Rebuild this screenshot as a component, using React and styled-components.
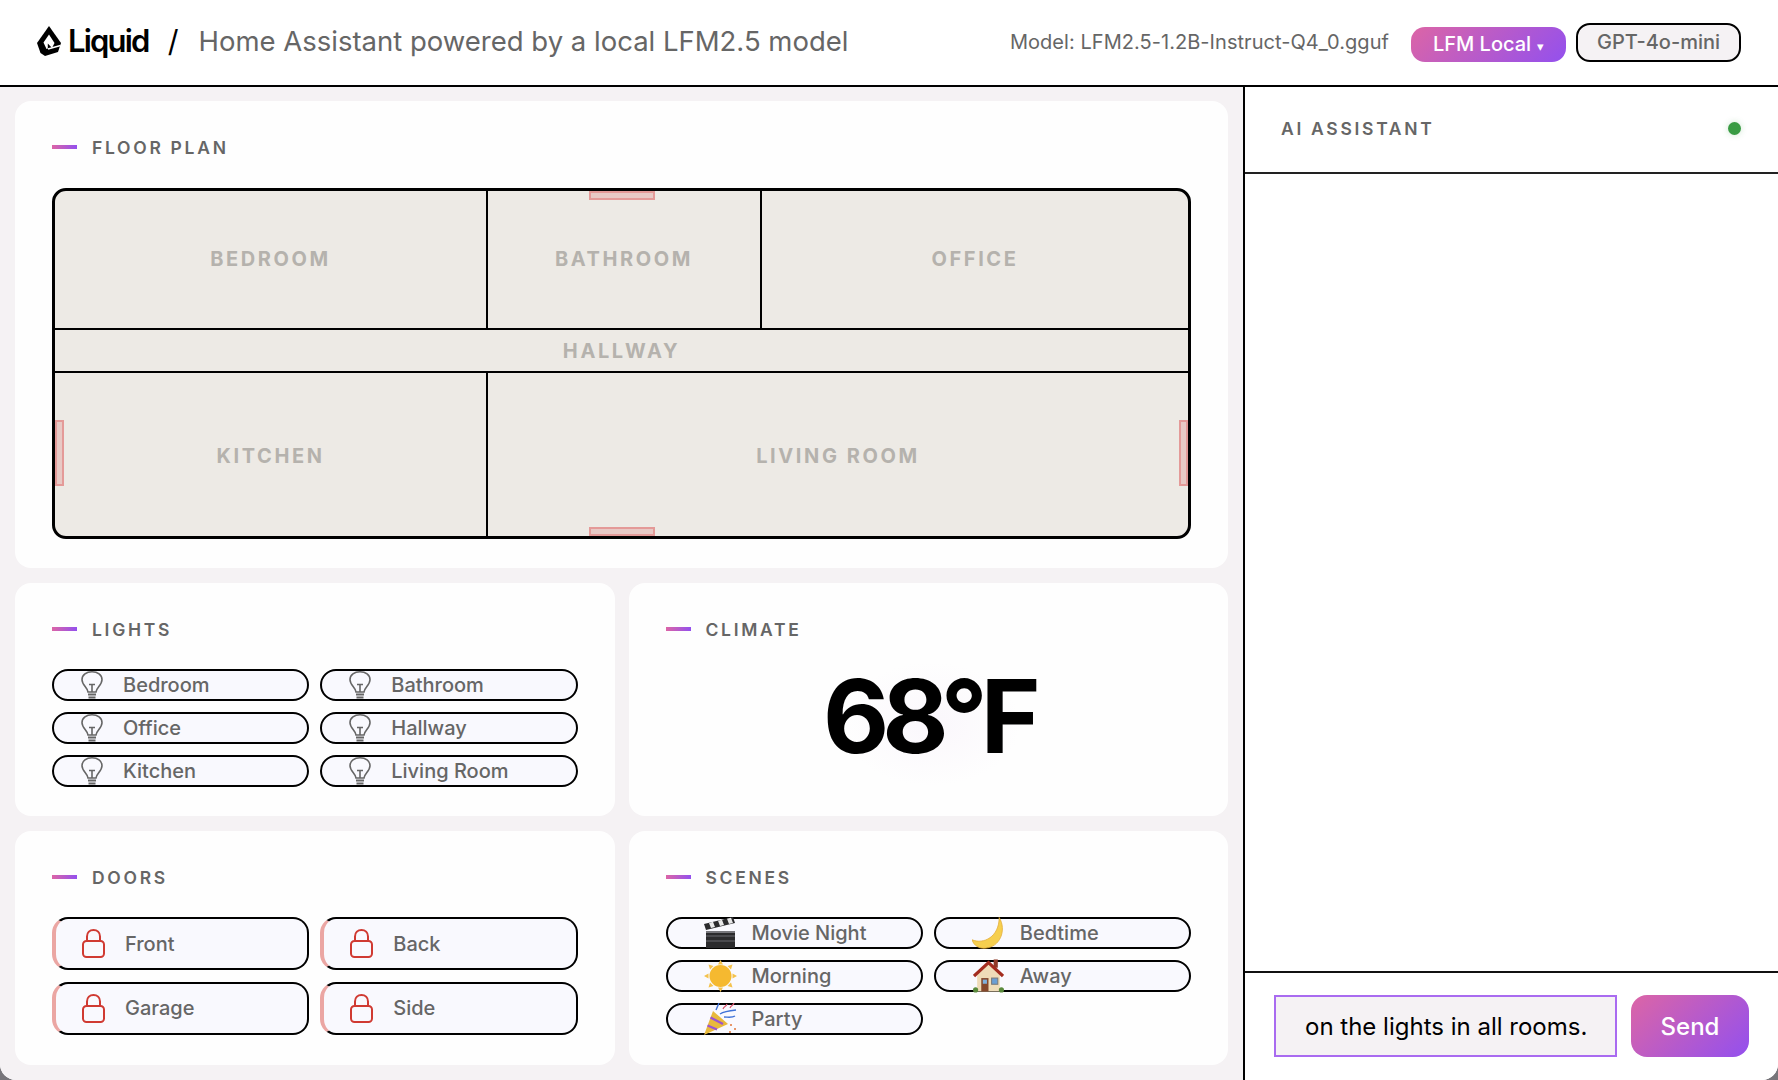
import React from 'react';
import styled, { createGlobalStyle, css } from 'styled-components';

const accent = 'linear-gradient(135deg, #dc65a6 0%, #9350ee 100%)';

const GlobalStyle = createGlobalStyle`
    html, body {
        margin: 0;
        padding: 0;
        background: #77757a;
        overflow: hidden;
    }
    * {
        box-sizing: border-box;
    }
`
const Frame = styled.div`
    width: 1778px;
    height: 1080px;
    display: flex;
    flex-direction: column;
    background: #fff;
    border-radius: 0 0 16px 16px;
    overflow: hidden;
    font-family: Inter, "Liberation Sans", sans-serif;
    color: #666;
`
const Header = styled.header`
    height: 87px;
    flex: none;
    display: flex;
    align-items: center;
    justify-content: space-between;
    padding: 0 37px 1px;
    border-bottom: 2px solid #000;
`
const Brand = styled.div`
    display: flex;
    align-items: center;
    margin-bottom: 3px;
`
const LogoText = styled.span`
    margin-left: 7px;
    font-size: 31px;
    font-weight: 600;
    letter-spacing: -1.8px;
    color: #000;
`
const Slash = styled.span`
    margin-left: 19px;
    font-size: 30px;
    color: #000;
`
const Title = styled.h1`
    margin: 0 0 0 20px;
    font-size: 27.5px;
    font-weight: 400;
    color: #666;
`
const ModelBar = styled.div`
    display: flex;
    align-items: flex-end;
    height: 39px;
`
const ModelName = styled.span`
    margin: 0 22px 3px 0;
    font-size: 20px;
    line-height: 34px;
    letter-spacing: 0.05px;
    color: #666;
`
const ModelButton = styled.button`
    font-family: inherit;
    font-size: 20px;
    font-weight: 500;
    border-radius: 14px;
    ${props => props.$active ? css`
        height: 35px;
        width: 155px;
        margin-right: 10px;
        border: none;
        background: ${accent};
        color: #fff;
    ` : css`
        height: 39px;
        width: 165px;
        border: 2px solid #000;
        background: #f5f2f4;
        color: #666;
    `}
`
const Caret = styled.span`
    margin-left: 6px;
    font-size: 13px;
`
const Main = styled.div`
    flex: 1;
    min-height: 0;
    display: flex;
`
const Dashboard = styled.main`
    width: 1243px;
    flex: none;
    display: grid;
    grid-template-columns: 1fr 1fr;
    grid-template-rows: 467px 233px 234px;
    gap: 15px 14px;
    padding: 14px 15px 15px;
    background: #f5f2f4;
`
const Card = styled.section`
    display: flex;
    flex-direction: column;
    padding: 36px 37px 0;
    background: #fefefe;
    border-radius: 16px;
    ${props => props.$wide && css`
        grid-column: 1 / 3;
    `}
`
const CardTitle = styled.h2`
    display: flex;
    align-items: center;
    height: 20px;
    margin: 0 0 30px;
    font-size: 17.5px;
    font-weight: 600;
    letter-spacing: 2.7px;
    color: #666;
    &::before {
        content: '';
        width: 25px;
        height: 4px;
        margin-right: 15px;
        background: linear-gradient(90deg, #dc65a6, #9350ee);
    }
`
const Floor = styled.div`
    position: relative;
    height: 351px;
    margin-top: 1px;
    display: grid;
    grid-template-columns: 433px 274px 1fr;
    grid-template-rows: 139px 43px 1fr;
    background: #edeae5;
    border: 3px solid #000;
    border-radius: 14px;
`
const Room = styled.div`
    display: flex;
    align-items: center;
    justify-content: center;
    padding: ${props => props.$pad || '0'};
    font-size: 20px;
    font-weight: 700;
    letter-spacing: 2.6px;
    color: #b5b2ad;
    ${props => props.$right && css`
        border-right: 2px solid #000;
    `}
    ${props => props.$bottom && css`
        border-bottom: 2px solid #000;
    `}
    ${props => props.$span && css`
        grid-column: span ${props.$span};
    `}
`
const windowSides = {
    top: css`top: 0; left: 534px; width: 66px; height: 9px;`,
    bottom: css`bottom: 0; left: 534px; width: 66px; height: 9px;`,
    left: css`top: 229px; left: 0; width: 9px; height: 66px;`,
    right: css`top: 229px; right: 0; width: 9px; height: 66px;`,
}
const Window = styled.span`
    position: absolute;
    background: rgba(214, 70, 70, 0.2);
    border: 2px solid rgba(222, 90, 90, 0.42);
    ${props => windowSides[props.$side]}
`
const ButtonGrid = styled.div`
    display: grid;
    grid-template-columns: 1fr 1fr;
    gap: ${props => props.$gap}px 11px;
`
const Pill = styled.button`
    display: flex;
    align-items: center;
    height: 32px;
    padding: 0 0 0 ${props => props.$inset}px;
    font-family: inherit;
    font-size: 20px;
    font-weight: 500;
    color: #666;
    background: #f9f9fe;
    border: 2px solid #000;
    border-radius: 16px;
`
const DoorButton = styled(Pill)`
    height: 53px;
    border-radius: 16px;
    border-left: 4px solid #eba6a3;
`
const Icon = styled.svg`
    flex: none;
    margin-right: ${props => props.$gap}px;
    overflow: visible;
`
const SceneIcon = styled.span`
    flex: none;
    width: 33px;
    margin-right: 15px;
    display: flex;
    justify-content: center;
    align-items: center;
    height: 28px;
    overflow: visible;
`
const Temperature = styled.div`
    position: relative;
    display: flex;
    justify-content: center;
    margin-top: -15px;
    font-size: 102px;
    line-height: 124px;
    font-weight: 700;
    letter-spacing: -7px;
    color: #000;
    &::before {
        content: '';
        position: absolute;
        left: 175px;
        top: 8px;
        width: 180px;
        height: 124px;
        border-radius: 50%;
        background: radial-gradient(closest-side, rgba(232, 210, 240, 0.16), rgba(232, 210, 240, 0));
    }
`
const TemperatureValue = styled.span`
    position: relative;
`
const Assistant = styled.aside`
    flex: 1;
    min-width: 0;
    display: flex;
    flex-direction: column;
    border-left: 2px solid #000;
    background: #fff;
`
const AssistantHeader = styled.div`
    height: 87px;
    flex: none;
    display: flex;
    align-items: center;
    justify-content: space-between;
    padding: 0 37px 2px 36px;
    border-bottom: 2px solid #222;
`
const AssistantTitle = styled.h2`
    margin: 0;
    font-size: 17.5px;
    font-weight: 600;
    letter-spacing: 2.7px;
    color: #666;
`
const StatusDot = styled.span`
    width: 13px;
    height: 13px;
    border-radius: 50%;
    background: #399b43;
    box-shadow: 0 0 6px rgba(57, 155, 67, 0.25);
`
const Messages = styled.div`
    flex: 1;
`
const Composer = styled.form`
    height: 109px;
    flex: none;
    display: flex;
    gap: 14px;
    padding: 22px 29px 23px 29px;
    border-top: 2px solid #111;
`
const ChatInput = styled.input`
    flex: 1;
    min-width: 0;
    padding: 0 29px;
    font-family: inherit;
    font-size: 24px;
    color: #000;
    background: #f5f2f4;
    border: 2px solid #a96bf0;
    border-radius: 0;
    outline: none;
`
const SendButton = styled.button`
    width: 118px;
    flex: none;
    font-family: inherit;
    font-size: 24px;
    font-weight: 500;
    color: #fff;
    background: ${accent};
    border: none;
    border-radius: 16px;
`

const LiquidMark = () => (
    <svg width="24" height="30" viewBox="0 0 24 30">
        <path d="M12 0 L24 17 L21 26 L8 30 L3.5 27 L0 17 Z" fill="#000" />
        <path d="M12 8.5 L6.5 16.5 L9.5 23 L10.8 22.6 L10.8 17.5 L15 22 L17.5 17 Z" fill="#fff" />
        <path d="M11 23 L23.5 19.5" stroke="#fff" strokeWidth="1.4" />
    </svg>
)

const BulbIcon = () => (
    <Icon $gap={19} width="24" height="28" viewBox="0 0 24 28" fill="none" stroke="#666" strokeWidth="1.6">
        <path d="M8 21 C7.5 16.5 2 14 2 8.8 C2 3.8 6.5 0.8 12 0.8 C17.5 0.8 22 3.8 22 8.8 C22 14 16.5 16.5 16 21 Z" />
        <path d="M9 13.5 H15 M12 13.5 V21" />
        <path d="M8 23.4 H16 M8.5 26.4 H15.5" strokeWidth="2" />
    </Icon>
)

const LockIcon = () => (
    <Icon $gap={20} width="23" height="29" viewBox="0 0 23 29" fill="none" stroke="#d03a32" strokeWidth="2">
        <rect x="1" y="12" width="21" height="16" rx="3.5" />
        <path d="M5 12 V7.5 C5 3.5 7.8 1 11.5 1 C15.2 1 18 3.5 18 7.5 V12" />
    </Icon>
)

const ClapperIcon = () => (
    <svg width="33" height="32" viewBox="0 0 33 32">
        <path d="M2 14 H31 V31 H2 Z" fill="#2b2b2d" />
        <path d="M2 19 H31 M2 24 H31" stroke="#55555a" strokeWidth="1.5" />
        <path d="M0 7 L29 0 L31 6 L2 13 Z" fill="#2b2b2d" />
        <path d="M5 6 L9 4.8 L11 10 L7 11 Z M14 3.8 L18 2.8 L20 8 L16 9 Z M23 1.8 L27 0.8 L29 6 L25 7 Z" fill="#e8e8e8" />
        <path d="M2 14 H31 V16 H2 Z" fill="#77777c" />
    </svg>
)

const MoonIcon = () => (
    <svg width="34" height="32" viewBox="0 0 34 32">
        <path d="M28 0 C36 13 29 31 13 31.7 C7 32 2 29 0 23 C12 28 28 20 28 0 Z" fill="#f6cf4f" stroke="#e3ab34" strokeWidth="0.8" />
    </svg>
)

const SunIcon = () => (
    <svg width="33" height="32" viewBox="0 0 33 32">
        <circle cx="16.5" cy="16" r="11" fill="#f5b930" />
        <path d="M16.5 0 L19 4.5 H14 Z M16.5 32 L19 27.5 H14 Z M0 16 L4.5 13.5 V18.5 Z M33 16 L28.5 13.5 V18.5 Z M4.5 4.5 L9.5 6 L6 9.5 Z M28.5 4.5 L23.5 6 L27 9.5 Z M4.5 27.5 L9.5 26 L6 22.5 Z M28.5 27.5 L23.5 26 L27 22.5 Z" fill="#f4c24c" />
    </svg>
)

const HouseIcon = () => (
    <svg width="31" height="34" viewBox="0 0 30 32">
        <path d="M4 15 L15 4 L26 15 V31 H4 Z" fill="#efdcb8" />
        <rect x="20" y="0" width="4" height="8" fill="#8f3a28" />
        <path d="M1 16 L15 3 L29 16" fill="none" stroke="#a32c1f" strokeWidth="3" />
        <rect x="8" y="18" width="7" height="13" fill="#84482c" />
        <rect x="9.5" y="19.5" width="4" height="4" fill="#7fb0dc" />
        <rect x="18" y="18" width="6" height="6" fill="#6b9fd4" stroke="#7a7a7a" />
        <circle cx="2.5" cy="29.5" r="2.5" fill="#5a8a3c" />
        <circle cx="27.5" cy="29.5" r="2.5" fill="#5a8a3c" />
    </svg>
)

const PartyIcon = () => (
    <svg width="33" height="32" viewBox="0 0 33 32">
        <path d="M0 32 L9 8 L24 21 Z" fill="#e8b93c" />
        <path d="M3.5 22.5 L13 26.5 M6.5 14.5 L19 21" stroke="#9a55d0" strokeWidth="2.4" />
        <path d="M16 11 C19 9 22 8 32 7 M12 7 L15 0 M20 14 C24 14 28 15 31 13" fill="none" stroke="#3f72d8" strokeWidth="1.4" />
        <path d="M19 6 C20 3 22 4 23 1 M26 5 C27 2 29 3 30 0" fill="none" stroke="#d9546e" strokeWidth="1.2" />
        <path d="M26 21 h2 v2 h-2 Z M30 25 h2 v2 h-2 Z M25 28 h2 v2 h-2 Z" fill="#e8976a" />
    </svg>
)

const lights = ['Bedroom', 'Bathroom', 'Office', 'Hallway', 'Kitchen', 'Living Room']
const doors = ['Front', 'Back', 'Garage', 'Side']
const scenes = [
    { name: 'Movie Night', Picture: ClapperIcon },
    { name: 'Bedtime', Picture: MoonIcon },
    { name: 'Morning', Picture: SunIcon },
    { name: 'Away', Picture: HouseIcon },
    { name: 'Party', Picture: PartyIcon },
]

const App = () => {
    return (
        <Frame>
            <GlobalStyle />
            <Header>
                <Brand>
                    <LiquidMark />
                    <LogoText>Liquid</LogoText>
                    <Slash>/</Slash>
                    <Title>Home Assistant powered by a local LFM2.5 model</Title>
                </Brand>
                <ModelBar>
                    <ModelName>Model: LFM2.5-1.2B-Instruct-Q4_0.gguf</ModelName>
                    <ModelButton $active>LFM Local<Caret>▾</Caret></ModelButton>
                    <ModelButton>GPT-4o-mini</ModelButton>
                </ModelBar>
            </Header>
            <Main>
                <Dashboard>
                    <Card $wide>
                        <CardTitle>FLOOR PLAN</CardTitle>
                        <Floor>
                            <Room $right $bottom $pad="0 0 2px">BEDROOM</Room>
                            <Room $right $bottom $pad="0 0 2px">BATHROOM</Room>
                            <Room $bottom $pad="0 0 2px">OFFICE</Room>
                            <Room $bottom $span={3}>HALLWAY</Room>
                            <Room $right $pad="2px 0 0">KITCHEN</Room>
                            <Room $span={2} $pad="2px 0 0">LIVING ROOM</Room>
                            <Window $side="top" />
                            <Window $side="bottom" />
                            <Window $side="left" />
                            <Window $side="right" />
                        </Floor>
                    </Card>
                    <Card>
                        <CardTitle>LIGHTS</CardTitle>
                        <ButtonGrid $gap={11}>
                            {lights.map(light => (
                                <Pill key={light} $inset={26}><BulbIcon />{light}</Pill>
                            ))}
                        </ButtonGrid>
                    </Card>
                    <Card>
                        <CardTitle>CLIMATE</CardTitle>
                        <Temperature><TemperatureValue>68°F</TemperatureValue></Temperature>
                    </Card>
                    <Card>
                        <CardTitle>DOORS</CardTitle>
                        <ButtonGrid $gap={11.5}>
                            {doors.map(door => (
                                <DoorButton key={door} $inset={26}><LockIcon />{door}</DoorButton>
                            ))}
                        </ButtonGrid>
                    </Card>
                    <Card>
                        <CardTitle>SCENES</CardTitle>
                        <ButtonGrid $gap={11}>
                            {scenes.map(({ name, Picture }) => (
                                <Pill key={name} $inset={36}><SceneIcon><Picture /></SceneIcon>{name}</Pill>
                            ))}
                        </ButtonGrid>
                    </Card>
                </Dashboard>
                <Assistant>
                    <AssistantHeader>
                        <AssistantTitle>AI ASSISTANT</AssistantTitle>
                        <StatusDot />
                    </AssistantHeader>
                    <Messages />
                    <Composer onSubmit={e => e.preventDefault()}>
                        <ChatInput readOnly value="on the lights in all rooms." />
                        <SendButton>Send</SendButton>
                    </Composer>
                </Assistant>
            </Main>
        </Frame>
    )
}
export default App
